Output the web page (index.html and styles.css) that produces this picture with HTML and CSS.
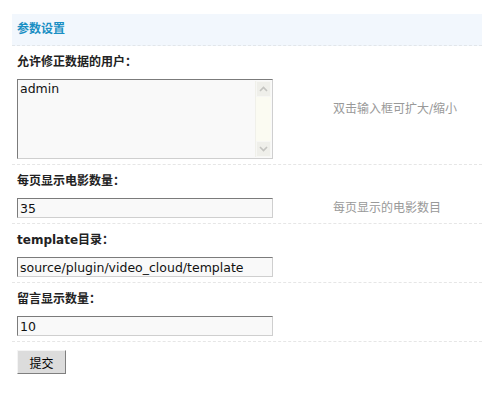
FILE: index.html
```html
<!DOCTYPE html>
<html lang="zh-CN">
<head>
<meta charset="utf-8">
<title>参数设置</title>
<link rel="stylesheet" href="styles.css">
</head>
<body>
<div class="panel">
  <div class="head">参数设置</div>

  <div class="label">允许修正数据的用户：</div>
  <div class="field">
    <div class="ctl">
      <div class="ta-box">
        <textarea class="ta">admin</textarea>
        <div class="sb">
          <div class="sb-btn">
            <svg width="9" height="6" viewBox="0 0 9 6"><path d="M1 5 L4.5 1.5 L8 5" fill="none" stroke="#c4c4c0" stroke-width="1.6"/></svg>
          </div>
          <div class="sb-track"></div>
          <div class="sb-btn">
            <svg width="9" height="6" viewBox="0 0 9 6"><path d="M1 1 L4.5 4.5 L8 1" fill="none" stroke="#c4c4c0" stroke-width="1.6"/></svg>
          </div>
        </div>
      </div>
    </div>
    <div class="tip tip-top">双击输入框可扩大/缩小</div>
  </div>

  <div class="label">每页显示电影数量：</div>
  <div class="field">
    <div class="ctl"><input class="txt" type="text" value="35"></div>
    <div class="tip">每页显示的电影数目</div>
  </div>

  <div class="label">template目录：</div>
  <div class="field">
    <div class="ctl"><input class="txt" type="text" value="source/plugin/video_cloud/template"></div>
    <div class="tip"></div>
  </div>

  <div class="label">留言显示数量：</div>
  <div class="field">
    <div class="ctl"><input class="txt" type="text" value="10"></div>
    <div class="tip"></div>
  </div>

  <div class="submit-row">
    <button class="btn" type="button">提交</button>
  </div>
</div>
</body>
</html>
```

FILE: styles.css
```css
html, body {
  margin: 0;
  padding: 0;
  background: #fff;
}

body {
  font-family: "DejaVu Sans", "Noto Sans CJK SC", sans-serif;
  font-size: 12px;
  color: #000;
}

.panel {
  margin: 14px 0 0 12px;
}

.head {
  height: 31px;
  line-height: 31px;
  padding-left: 5px;
  background: #f2f7fd;
  border-bottom: 1px dashed #e2e6ea;
  color: #1a8fc4;
  font-weight: bold;
}

.label {
  height: 18px;
  line-height: 18px;
  padding: 7px 5px 0;
  font-weight: bold;
  color: #222;
}

.field {
  display: grid;
  grid-template-columns: 316px 1fr;
  padding: 8px 0 5px;
  border-bottom: 1px dashed #e6e6e6;
}

.ctl {
  padding-left: 5px;
  display: flex;
}

.tip {
  padding-left: 5px;
  color: #999;
  line-height: 18px;
  align-self: center;
}

.tip-top {
  align-self: start;
  margin-top: 21px;
}

.txt,
.ta-box {
  box-sizing: border-box;
  width: 256px;
  border-style: solid;
  border-width: 1px;
  border-color: #7b7b7b #cfcfcf #cfcfcf #7b7b7b;
  background: #f9f9f9;
}

.txt {
  height: 20px;
  margin: 0;
  padding: 0 2px;
  font-family: "DejaVu Sans", "Noto Sans CJK SC", sans-serif;
  font-size: 12.5px;
  color: #111;
  outline: none;
}

.ta-box {
  height: 80px;
  display: flex;
}

.ta {
  flex: 1;
  margin: 0;
  padding: 1px 2px;
  border: 0;
  background: transparent;
  resize: none;
  overflow: hidden;
  font-family: "DejaVu Sans", "Noto Sans CJK SC", sans-serif;
  font-size: 12.5px;
  line-height: 16px;
  color: #111;
  outline: none;
}

.sb {
  width: 15px;
  margin: 1px 1px 1px 0;
  display: flex;
  flex-direction: column;
  background: #fbfbf2;
  border-left: 1px solid #f0f0ea;
}

.sb-btn {
  height: 14px;
  display: flex;
  align-items: center;
  justify-content: center;
  background: #efefea;
  border: 1px solid #f7f7f4;
}

.sb-track {
  flex: 1;
}

.submit-row {
  padding: 8px 5px;
}

.btn {
  width: 49px;
  height: 24px;
  margin: 0;
  padding: 0;
  background: #dcdcdc;
  border-style: solid;
  border-width: 1px;
  border-color: #f4f4f4 #7f7f7f #7f7f7f #f4f4f4;
  font-family: "Noto Sans CJK SC", sans-serif;
  font-size: 12px;
  color: #000;
}
```
